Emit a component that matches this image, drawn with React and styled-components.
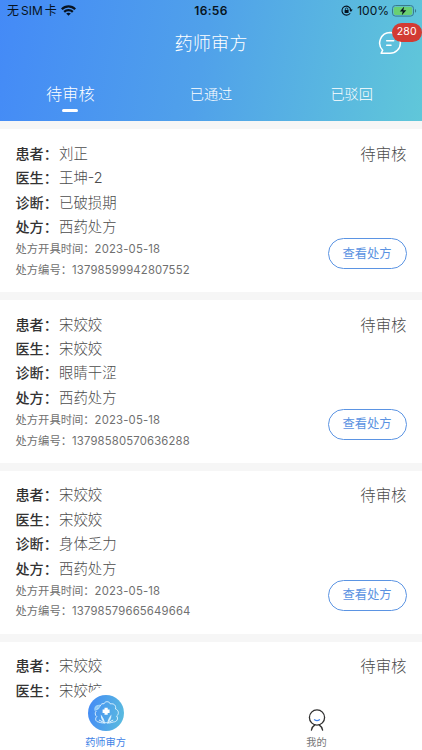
import React from 'react';
import styled, { createGlobalStyle } from 'styled-components';

const orders = [
  { id: 1, patient: '刘正', doctor: '王坤-2', diagnosis: '已破损期', type: '西药处方', date: '2023-05-18', code: '13798599942807552' },
  { id: 2, patient: '宋姣姣', doctor: '宋姣姣', diagnosis: '眼睛干涩', type: '西药处方', date: '2023-05-18', code: '13798580570636288' },
  { id: 3, patient: '宋姣姣', doctor: '宋姣姣', diagnosis: '身体乏力', type: '西药处方', date: '2023-05-18', code: '13798579665649664' },
  { id: 4, patient: '宋姣姣', doctor: '宋姣姣' },
];

const tabs = ['待审核', '已通过', '已驳回'];

export default function App() {
  return (
    <Screen>
      <GlobalStyle />
      <Header>
        <StatusBar>
          <Carrier>
            <span>无</span>
            <span>SIM</span>
            <span>卡</span>
            <WifiIcon />
          </Carrier>
          <Clock>16:56</Clock>
          <Power>
            <LockIcon />
            <span>100%</span>
            <BatteryIcon />
          </Power>
        </StatusBar>
        <TitleBar>
          <Title>药师审方</Title>
          <Messages>
            <MessageIcon />
            <Badge>280</Badge>
          </Messages>
        </TitleBar>
        <Tabs>
          {tabs.map((tab, index) => (
            <Tab key={tab} $active={index === 0}>{tab}</Tab>
          ))}
        </Tabs>
      </Header>
      <List>
        {orders.map((order) => (
          <Card key={order.id}>
            <Info>
              <Row><Label>患者：</Label>{order.patient}</Row>
              <Row><Label>医生：</Label>{order.doctor}</Row>
              {order.code && (
                <>
                  <Row><Label>诊断：</Label>{order.diagnosis}</Row>
                  <Row><Label>处方：</Label>{order.type}</Row>
                  <SmallRow>处方开具时间：<Digits>{order.date}</Digits></SmallRow>
                  <SmallRow>处方编号：<Digits>{order.code}</Digits></SmallRow>
                </>
              )}
            </Info>
            <Side>
              <Status>待审核</Status>
              {order.code && <ViewButton>查看处方</ViewButton>}
            </Side>
          </Card>
        ))}
      </List>
      <BottomBar>
        <BottomItem $active>
          <Ring><FlowerIcon /></Ring>
          药师审方
        </BottomItem>
        <BottomItem>
          <PersonIcon />
          我的
        </BottomItem>
      </BottomBar>
    </Screen>
  );
}

function WifiIcon() {
  return (
    <svg width="15" height="11" viewBox="0 0 15 11" fill="none" stroke="#071321" strokeWidth="2.2">
      <path d="M0.8 4.3C4.5 0.5 10.5 0.5 14.2 4.3" />
      <path d="M3.2 6.9C5.6 4.5 9.4 4.5 11.8 6.9" />
      <path d="M7.5 10.8L5.2 8.6C6.5 7.4 8.5 7.4 9.8 8.6Z" fill="#071321" stroke="none" />
    </svg>
  );
}

function LockIcon() {
  return (
    <svg width="12" height="11" viewBox="0 0 12 11" fill="none" stroke="#071321" strokeWidth="1.1">
      <path d="M9.2 8.2A4.5 4.5 0 1 1 9.9 4.8" />
      <path d="M8.2 4.6h3.5L9.9 7.1z" fill="#071321" stroke="none" />
      <rect x="3.6" y="4.9" width="4" height="3.1" rx="0.5" fill="#071321" stroke="none" />
      <path d="M4.4 5V4.1a1.2 1.2 0 0 1 2.4 0V5" strokeWidth="0.8" />
    </svg>
  );
}

function BatteryIcon() {
  return (
    <svg width="25" height="12" viewBox="0 0 25 12">
      <rect x="0.5" y="0.5" width="21" height="10.6" rx="3" fill="none" stroke="#39798d" strokeWidth="1" />
      <rect x="1.7" y="1.7" width="18.6" height="8.2" rx="1.9" fill="#69cf72" />
      <path d="M23 4v3.8c1.5-.6 1.5-3.2 0-3.8z" fill="#39798d" />
      <path d="M12.2 1.5L7.8 6.5h2.9L9.8 10.3l4.5-5h-3z" fill="#071321" />
    </svg>
  );
}

function MessageIcon() {
  return (
    <svg width="24" height="24" viewBox="0 0 24 24" fill="none" stroke="#fff" strokeWidth="1.5" strokeLinecap="round" strokeLinejoin="round">
      <path d="M12 1.5A10.4 10.4 0 1 1 12 22.3H3.1L4.7 19.2A10.4 10.4 0 0 1 12 1.5Z" />
      <path d="M8.7 9.8h7M8.7 14.2h4.3" />
    </svg>
  );
}

function FlowerIcon() {
  return (
    <svg width="36" height="36" viewBox="0 0 36 36" fill="none" stroke="#e6f6ff" strokeWidth="0.9">
      <path d="M12.2 11.4C12.6 8.6 15 8.4 15.9 8.8C17 6 21.2 6 22.4 8.9C26 8.2 28.4 10.6 27.5 14C31 15 31.2 19.4 28.6 21C30.8 23.6 29 27 25.2 27C22.5 28 20.2 28.3 18.2 27.6C16.2 28.3 13 28 10.7 27C7.2 26.6 6.9 23.3 8.8 21.6C6.9 20.2 6.7 17.7 8.3 16" />
      <path d="M6.3 14C6.5 11 8.9 9.6 12.1 9.8C12.4 13 10.4 15.4 6.5 15.7Z" fill="#a9d9fb" stroke="none" />
      <path d="M6.6 15.2L11.3 10.4M8.1 11.2v3M10.2 10.4v2.6" stroke="#62aff0" strokeWidth="0.4" />
      <path d="M16.5 12.8h3.2v1.8h1.9v3.4h-1.9v1.8h-3.2v-1.8h-1.9v-3.4h1.9z" fill="#fff" stroke="none" />
      <path d="M12.8 19.6C14.6 21.6 16.4 24.6 17 27.9C14.4 26.6 12.6 23.8 12.8 19.6Z" fill="#d8f0fd" stroke="none" />
      <path d="M23.4 19.6C21.6 21.6 19.8 24.6 19.2 27.9C21.8 26.6 23.6 23.8 23.4 19.6Z" fill="#d8f0fd" stroke="none" />
      <path d="M11 25L16.9 28M25.2 25L19.3 28" strokeWidth="1" />
    </svg>
  );
}

function PersonIcon() {
  return (
    <svg width="18" height="23" viewBox="0 0 18 23" fill="none" stroke="#303030" strokeWidth="1.3" strokeLinecap="round">
      <circle cx="9" cy="8.5" r="7.6" />
      <path d="M3.4 21.2C3.9 18.7 5.2 16.9 6.9 15.9M14.6 21.2C14.1 18.7 12.8 16.9 11.1 15.9" />
      <path d="M6.5 10.8C8 11.7 10 11.7 11.5 10.8" stroke="#3f82eb" />
    </svg>
  );
}

const GlobalStyle = createGlobalStyle`
  body {
    margin: 0;
    overflow: hidden;
  }

  * {
    box-sizing: border-box;
  }
`;

const Screen = styled.div`
  position: relative;
  width: 422px;
  height: 750px;
  overflow: hidden;
  background: #f6f6f6;
  font-family: Inter, 'Noto Sans CJK SC', sans-serif;
  color: #4c4c4c;
`;

const Header = styled.header`
  height: 121.4px;
  background: linear-gradient(100deg, #448af7 0%, #50a1ea 48%, #60c7d9 100%);
  color: #fff;
`;

const StatusBar = styled.div`
  display: grid;
  grid-template-columns: 1fr auto 1fr;
  align-items: center;
  height: 21px;
  padding: 0 5px 0 7px;
  color: #071321;
  font-size: 12px;
  line-height: 20px;
`;

const Carrier = styled.div`
  display: flex;
  align-items: center;
  gap: 2px;

  svg {
    margin-left: 2px;
  }
`;

const Clock = styled.div`
  margin-left: -2px;
  font-size: 12px;
  font-weight: 600;
  letter-spacing: 0.35px;
`;

const Power = styled.div`
  display: flex;
  align-items: center;
  justify-content: flex-end;
  gap: 4px;

  svg:last-child {
    margin-left: -1px;
  }
`;

const TitleBar = styled.div`
  display: flex;
  align-items: center;
  justify-content: center;
  height: 43px;
`;

const Title = styled.h1`
  margin: 0;
  font-size: 18.3px;
  font-weight: 300;
  line-height: 26px;
`;

const Messages = styled.div`
  position: absolute;
  top: 31px;
  left: 378px;
  height: 24px;
`;

const Badge = styled.span`
  position: absolute;
  top: -8.5px;
  left: 13.5px;
  width: 30.5px;
  height: 19px;
  border-radius: 10px;
  background: #d23b33;
  font-size: 10.5px;
  line-height: 18px;
  letter-spacing: 0.2px;
  text-align: center;
`;

const Tabs = styled.nav`
  display: grid;
  grid-template-columns: repeat(3, 1fr);
  height: 57.4px;
  font-weight: 300;
`;

const Tab = styled.div`
  display: flex;
  flex-direction: column;
  align-items: center;
  padding-top: 19px;
  font-size: ${(props) => (props.$active ? '16.2px' : '14.2px')};
  line-height: 22px;

  &::after {
    content: '';
    display: ${(props) => (props.$active ? 'block' : 'none')};
    width: 16px;
    height: 3px;
    margin-top: 4px;
    border-radius: 2px;
    background: #fff;
  }
`;

const List = styled.main`
  display: flex;
  flex-direction: column;
  gap: 8px;
  padding-top: 7.8px;
`;

const Card = styled.section`
  display: flex;
  flex-shrink: 0;
  justify-content: space-between;
  height: 162.8px;
  padding: 12.6px 15.5px 0 15.5px;
  background: #fff;
`;

const Info = styled.div`
  display: flex;
  flex-direction: column;
`;

const Row = styled.div`
  display: flex;
  height: 24.4px;
  font-size: 14.4px;
  font-weight: 300;
  line-height: 24.4px;
  white-space: nowrap;
`;

const Label = styled.span`
  width: 43.5px;
  color: #333;
  font-size: 14.1px;
  font-weight: 500;
`;

const SmallRow = styled.div`
  height: 20.5px;
  color: #707070;
  font-size: 11.3px;
  line-height: 20.5px;
  white-space: nowrap;
`;

const Digits = styled.span`
  letter-spacing: 0.18px;
`;

const Side = styled.div`
  display: flex;
  flex-direction: column;
  align-items: flex-end;
`;

const Status = styled.div`
  padding-top: 1px;
  font-size: 15.4px;
  font-weight: 300;
  line-height: 24.4px;
`;

const ViewButton = styled.button`
  width: 79px;
  height: 31px;
  margin-top: 70.9px;
  padding: 0;
  border: 1px solid #5b94e3;
  border-radius: 16px;
  background: #fff;
  color: #5a92e2;
  font-family: inherit;
  font-size: 12.3px;
  line-height: 28px;
`;

const BottomBar = styled.footer`
  position: absolute;
  right: 0;
  bottom: 0;
  left: 0;
  display: grid;
  grid-template-columns: 1fr 1fr;
  grid-template-rows: 51px;
  height: 51px;
  background: #fff;
`;

const BottomItem = styled.div`
  display: flex;
  flex-direction: column;
  align-items: center;
  justify-content: flex-end;
  padding-bottom: 1px;
  color: ${(props) => (props.$active ? '#3f83e6' : '#777')};
  font-size: 10.2px;
  line-height: 14px;

  > svg {
    margin-bottom: 3px;
  }
`;

const Ring = styled.div`
  flex-shrink: 0;
  margin-bottom: -4px;
  padding: 8px;
  border-radius: 50%;
  background: #fff;

  svg {
    display: block;
    border-radius: 50%;
    background: linear-gradient(100deg, #4389f6, #5bbede);
  }
`;
